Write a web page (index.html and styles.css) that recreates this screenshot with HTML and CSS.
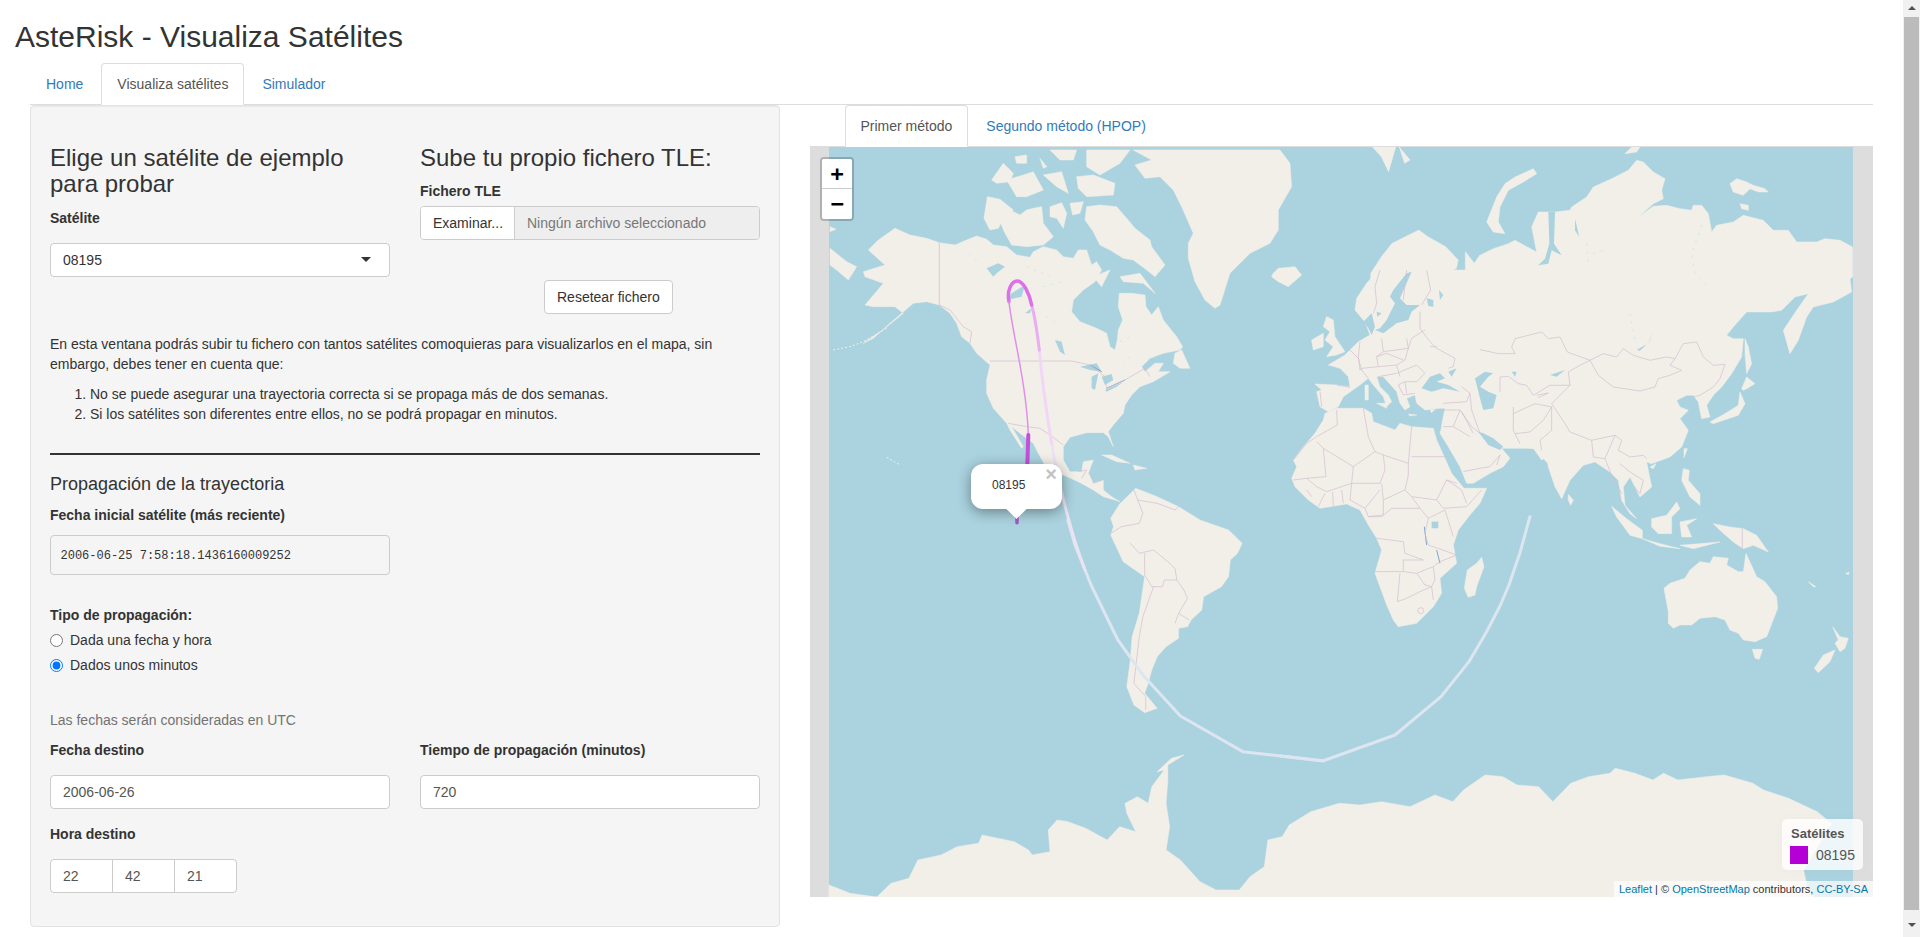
FILE: index.html
```html
<!DOCTYPE html>
<html lang="es">
<head>
    <meta charset="UTF-8">
    <title>AsteRisk - Visualiza Satélites</title>
    <link rel="stylesheet" href="styles.css">
</head>
<body>
    <div class="page">
        <h2 class="title">AsteRisk - Visualiza Satélites</h2>
        <ul class="nav-tabs">
            <li><a href="#">Home</a></li>
            <li class="active"><a href="#">Visualiza satélites</a></li>
            <li><a href="#">Simulador</a></li>
        </ul>

        <div class="main-row">
            <div class="well">
                <div class="form-cols">
                    <div>
                        <h3>Elige un satélite de ejemplo para probar</h3>
                        <label class="label-gap">Satélite</label>
                        <div class="select-box">
                            <span>08195</span>
                            <i class="caret"></i>
                        </div>
                    </div>
                    <div>
                        <h3>Sube tu propio fichero TLE:</h3>
                        <label>Fichero TLE</label>
                        <div class="file-group">
                            <span class="file-btn">Examinar...</span>
                            <span class="file-name">Ningún archivo seleccionado</span>
                        </div>
                        <button class="btn-reset" type="button">Resetear fichero</button>
                    </div>
                </div>

                <p class="intro">En esta ventana podrás subir tu fichero con tantos satélites comoquieras para visualizarlos en el mapa, sin embargo, debes tener en cuenta que:</p>
                <ol>
                    <li>No se puede asegurar una trayectoria correcta si se propaga más de dos semanas.</li>
                    <li>Si los satélites son diferentes entre ellos, no se podrá propagar en minutos.</li>
                </ol>
                <hr>

                <h4>Propagación de la trayectoria</h4>
                <label>Fecha inicial satélite (más reciente)</label>
                <pre class="half">2006-06-25 7:58:18.1436160009252</pre>

                <label class="tipo">Tipo de propagación:</label>
                <div class="radio"><input type="radio" name="tipo"><span>Dada una fecha y hora</span></div>
                <div class="radio"><input type="radio" name="tipo" checked><span>Dados unos minutos</span></div>

                <p class="help">Las fechas serán consideradas en UTC</p>

                <div class="form-cols">
                    <div>
                        <label class="label-gap">Fecha destino</label>
                        <input class="form-control" type="text" value="2006-06-26">
                    </div>
                    <div>
                        <label class="label-gap">Tiempo de propagación (minutos)</label>
                        <input class="form-control" type="text" value="720">
                    </div>
                </div>

                <label class="label-gap hora">Hora destino</label>
                <div class="time-group">
                    <span>22</span>
                    <span>42</span>
                    <span>21</span>
                </div>
            </div>

            <div class="map-col">
                <ul class="nav-tabs sub-tabs">
                    <li class="active"><a href="#">Primer método</a></li>
                    <li><a href="#">Segundo método (HPOP)</a></li>
                </ul>

                <div class="map">
                    <svg class="map-svg" viewBox="810 147 1063 750">
                        <rect class="sea" x="829" y="147" width="1024" height="750"/>

                        <g class="land">
                            <!-- Norteamerica y Groenlandia -->
                            <g transform="translate(830 150) scale(.3333)">
                                <polygon points="0,295 50,335 80,350 55,390 20,360 0,345"/>
                                <polygon points="0,230 18,238 0,245"/>
                                <polygon points="195,235 240,255 290,265 328,278 375,285 410,270 440,258 470,268 490,285 530,290 560,315 600,322 610,305 640,290 680,300 700,320 730,325 745,300 770,300 785,345 800,335 815,360 795,395 760,420 730,450 725,485 750,515 800,535 830,550 840,590 855,600 862,570 865,540 878,510 865,470 868,430 905,430 945,435 948,470 965,495 985,470 1000,510 1040,560 1058,590 1050,600 1000,610 960,625 935,650 945,665 975,640 1000,640 985,665 1020,665 970,695 930,710 905,735 885,765 880,790 850,825 835,845 850,890 835,860 820,848 770,848 720,862 700,890 700,930 720,965 755,965 760,935 790,930 775,970 790,1000 820,990 820,1020 845,1040 870,1055 855,1050 820,1040 790,1020 745,995 700,975 650,955 625,910 610,880 590,865 570,850 545,830 580,890 575,895 540,840 530,820 490,775 470,730 470,690 480,645 440,610 420,580 395,560 380,520 360,490 328,465 290,455 250,460 215,490 180,520 130,565 100,580 165,535 220,490 195,470 130,470 105,465 135,430 160,400 105,380 100,365 165,345 115,300 145,270"/>
                                <polygon points="1035,610 1055,600 1080,655 1050,655 1030,640"/>
                                <polygon points="462,205 472,140 510,148 550,180 520,205 505,235 480,240"/>
                                <polygon points="510,215 540,180 570,195 590,180 610,175 635,170 640,220 670,260 640,285 590,290 545,285 525,250"/>
                                <polygon points="660,170 695,158 710,190 700,235 680,205 660,200"/>
                                <polygon points="720,160 760,155 750,190 728,195"/>
                                <polygon points="770,170 810,165 860,170 890,205 915,235 960,270 965,290 1005,345 975,380 950,360 910,330 880,325 840,300 810,285 790,245 765,210"/>
                                <polygon points="790,380 840,360 815,410"/>
                                <polygon points="870,380 930,370 975,430 940,400 880,395"/>
                                <polygon points="485,90 520,40 550,70 540,95 500,100"/>
                                <polygon points="530,90 580,75 610,65 640,120 590,140 560,140"/>
                                <polygon points="555,20 590,15 590,40 560,40"/>
                                <polygon points="640,75 695,65 715,130 680,110"/>
                                <polygon points="740,80 790,75 855,100 850,135 770,140 745,115"/>
                                <polygon points="770,0 900,0 870,40 810,75 770,50"/>
                                <polygon points="660,0 740,0 730,30 690,30"/>
                                <polygon points="630,25 650,50 640,55"/>
                                <polygon points="910,0 1350,0 1380,40 1385,110 1345,180 1345,240 1320,280 1260,310 1200,370 1170,465 1155,475 1125,450 1095,395 1075,325 1075,280 1090,250 1055,170 1030,120 990,80 945,85 915,45 965,30"/>
                                <polygon points="1330,370 1345,355 1395,350 1415,375 1375,410 1345,395 1325,380"/>
                                <polygon points="815,915 845,915 900,940 860,935"/>
                                <polygon points="910,945 950,955 915,960"/>
                                <polygon points="1490,500 1510,510 1515,560 1545,605 1520,615 1490,620 1510,590 1485,570 1500,545 1480,530"/>
                                <polygon points="1445,570 1480,550 1480,590 1450,600"/>
                            </g>

                            <!-- Sudamerica, Antartida y norte de Europa -->
                            <g transform="translate(800 100) scale(.35714 .33333)">
                                <polygon points="895,1212 940,1165 1000,1190 1060,1220 1120,1260 1200,1290 1238,1330 1225,1360 1205,1380 1200,1430 1180,1460 1130,1490 1125,1530 1095,1560 1085,1580 1060,1585 1060,1615 1025,1640 1000,1670 985,1710 975,1750 965,1780 1000,1825 965,1838 935,1815 915,1760 925,1680 930,1610 950,1540 965,1430 905,1385 870,1305 878,1280 870,1255"/>
                                <polygon points="81,2355 105,2365 140,2380 215,2391 255,2350 305,2335 330,2280 395,2265 440,2240 500,2230 510,2205 600,2225 640,2250 650,2265 700,2255 695,2190 720,2160 750,2165 800,2185 860,2220 895,2180 940,2195 915,2140 910,2110 945,2090 975,2110 985,2060 1020,2010 1000,2015 1040,1975 1075,1965 1030,1995 1030,2040 1025,2110 1035,2180 1025,2250 1065,2280 1120,2345 1165,2370 1230,2370 1260,2330 1300,2300 1310,2220 1350,2210 1370,2175 1430,2135 1510,2110 1568,2115 1628,2105 1708,2120 1778,2085 1828,2105 1858,2070 1918,2025 1968,2030 2008,2055 2068,2060 2108,2105 2158,2050 2208,2030 2268,2020 2283,2005 2338,2020 2388,2040 2418,2020 2458,2040 2538,2030 2588,2025 2668,2050 2698,2070 2768,2095 2848,2135 2888,2170 2810,2310 2820,2360 2840,2391 81,2391"/>
                                <g transform="translate(1568 0)">
                                    <polygon points="30,520 60,470 90,430 165,390 190,410 240,440 275,480 270,505 235,525 225,545 260,540 295,510 295,455 320,490 336,465 336,620 30,620"/>
                                    <polygon points="35,141 100,141 80,215 60,170"/>
                                    <polygon points="110,141 140,180 125,190"/>
                                </g>
                            </g>

                            <!-- Europa, Oriente Medio, Africa -->
                            <g transform="translate(1240 270) scale(.3333)">
                                <polygon points="415,0 380,40 350,85 345,120 370,150 375,155 390,195 355,215 330,240 315,255 265,285 300,295 325,320 330,350 290,345 225,342 245,360 230,365 240,410 265,425 295,410 310,380 360,345 385,325 400,345 430,380 440,410 455,395 445,375 420,350 410,320 430,320 470,365 480,400 495,420 510,410 500,385 525,375 530,400 555,420 600,415 615,415 605,465 605,470 600,490 625,530 660,590 680,640 700,640 750,610 790,590 810,565 785,535 815,535 880,535 905,570 920,560 925,590 945,650 965,685 985,625 1035,580 1075,560 1100,570 1100,0"/>
                                <polygon points="255,430 290,415 370,415 395,430 400,455 465,480 480,460 515,470 580,475 590,510 635,610 672,655 740,655 720,700 690,735 655,780 640,825 650,880 600,925 605,970 580,1010 530,1060 475,1070 460,1050 440,1005 405,910 425,840 410,805 382,760 360,720 320,702 240,715 205,690 165,650 155,625 170,590 160,570 190,530 225,490 250,450"/>
                                <polygon points="410,400 440,400 440,415"/>
                                <polygon points="375,345 385,345 385,390 375,390"/>
                                <polygon points="505,432 530,435 510,438"/>
                                <polygon points="570,420 585,418 575,428"/>
                            </g>
                            <polygon transform="translate(1280 480) scale(.3333)" points="605,232 612,260 590,320 585,345 565,352 553,325 562,270 590,250"/>

                            <!-- Asia norte y este -->
                            <g transform="translate(1480 147) scale(.3333)">
                                <polygon points="0,325 40,305 85,290 105,280 170,315 165,290 155,240 175,195 205,195 225,195 270,190 275,180 320,150 340,120 395,95 445,70 470,40 490,45 520,75 555,95 545,130 550,155 520,170 475,210 520,178 560,175 600,185 635,190 640,175 665,175 685,200 695,255 710,235 760,225 790,205 850,220 880,250 925,250 950,285 1010,285 1035,275 1080,280 1118,300 1118,390 1110,395 1115,435 1060,465 1000,480 980,510 955,580 930,620 910,550 950,490 985,440 945,450 905,490 875,495 800,495 760,540 740,565 760,575 790,575 785,630 755,680 725,720 700,745 680,775 690,810 665,815 655,765 640,745 620,745 590,760 600,780 625,790 600,815 625,850 605,900 570,930 515,950 500,945 515,1020 480,1050 450,990 430,1020 435,1075 470,1115 450,1100 425,1060 415,1000 390,975 345,945 310,955 270,1000 245,1055 230,1020 205,950 170,915 165,905 110,900 60,880 0,870"/>
                                <polygon points="20,225 50,150 75,110 105,90 160,65 170,80 130,105 85,130 60,180 55,225 75,260 40,255"/>
                                <polygon points="435,20 455,0 480,0 470,15"/>
                                <polygon points="750,110 770,95 800,105 820,115 855,125 865,135 835,135 810,125 790,145 760,135"/>
                                <polygon points="780,170 805,175 805,190 785,185"/>
                                <polygon points="795,575 805,600 815,650 800,680 795,620"/>
                                <polygon points="785,725 800,690 825,710 800,725 790,730"/>
                                <polygon points="690,825 735,800 775,775 780,735 795,770 775,805 700,830"/>
                                <polygon points="612,905 622,905 612,932"/>
                                <polygon points="510,960 528,950 520,965"/>
                                <polygon points="610,965 628,970 625,1000 660,1040 660,1075 630,1050 605,1000"/>
                                <polygon points="515,1115 560,1105 590,1065 600,1085 575,1110 575,1160 535,1160 515,1140"/>
                                <polygon points="600,1125 650,1115 620,1135 635,1170 605,1170"/>
                                <polygon points="395,1078 440,1115 487,1150 487,1175 450,1165 410,1110"/>
                                <polygon points="487,1175 540,1190 600,1205 540,1198"/>
                                <polygon points="600,1195 720,1185 640,1205"/>
                                <polygon points="700,1130 750,1140 790,1145 830,1165 865,1215 820,1195 790,1205 760,1185 720,1150"/>
                                <polygon points="265,1042 280,1060 272,1075 265,1060"/>
                            </g>

                            <!-- Oceania -->
                            <g transform="translate(1600 540) scale(.3333)">
                                <polygon points="192,145 210,130 255,115 270,90 300,65 330,70 340,50 385,55 380,75 415,95 430,95 438,40 470,110 495,125 530,170 533,205 510,265 500,290 465,305 430,300 415,280 390,270 375,240 345,230 300,235 275,255 240,255 220,265 205,250 205,215"/>
                                <polygon points="457,328 488,328 478,358 465,355"/>
                                <polygon points="698,260 720,290 745,295 735,325 720,335 705,310 715,300"/>
                                <polygon points="705,330 690,365 655,398 643,385 670,345"/>
                                <polygon points="625,125 648,140 640,140"/>
                                <polygon points="737,100 748,97 745,104"/>
                            </g>
                        </g>

                        <g class="water">
                            <g transform="translate(830 150) scale(.3333)">
                                <polygon points="470,355 505,340 525,350 500,370 490,380"/>
                                <polygon points="530,450 545,430 585,405 575,440"/>
                                <polygon points="585,490 605,475 600,490"/>
                                <polygon points="675,570 695,575 705,615 690,605"/>
                                <polygon points="750,650 800,640 815,665 780,660"/>
                                <polygon points="785,680 805,670 795,720 785,715"/>
                                <polygon points="815,680 845,672 850,690 825,705"/>
                                <polygon points="825,720 880,695 860,710 830,725"/>
                            </g>
                            <g transform="translate(1240 270) scale(.3333)">
                                <polygon points="460,60 500,10 515,5 495,50 480,85 500,105 540,105 515,125 505,150 470,160 430,190 405,180 420,175 440,150 465,100 450,80"/>
                                <polygon points="370,155 395,130 405,170 395,195 385,175"/>
                                <polygon points="560,85 580,90 580,110 565,108"/>
                                <polygon points="597,60 610,75 600,90"/>
                                <polygon points="410,125 425,130 412,140"/>
                                <polygon points="545,355 570,320 600,310 615,325 590,335 625,345 660,365 610,355 575,365"/>
                                <polygon points="625,305 650,295 635,320"/>
                                <polygon points="705,325 735,305 760,310 745,320 720,350 745,365 770,375 760,415 730,420 720,385"/>
                                <polygon points="715,485 745,525 780,540 790,530 760,505 730,490"/>
                                <polygon points="815,305 830,305 825,320"/>
                                <polygon points="930,315 975,300 950,320"/>
                                <polygon points="1190,240 1225,220 1240,182 1228,215 1200,242"/>
                                <polygon points="575,755 595,755 595,775 575,775"/>
                            </g>
                            <polygon transform="translate(1480 147) scale(.3333)" points="205,195 225,195 222,290 245,325 215,310 205,350 175,355 195,335 208,290"/>
                            <polygon transform="translate(1480 147) scale(.3333)" points="285,215 298,270 285,250"/>
                        </g>

                        <path class="rivers" transform="translate(830 150) scale(.3333)" d="M780 645 L815 665 M830 715 L885 690"/>
                        <path class="rivers" transform="translate(1240 270) scale(.3333)" d="M553 770 L560 825 M590 840 L600 880"/>
                        <path class="specks" transform="translate(830 150) scale(.3333)" d="M640 410 L700 395 M650 500 L690 525 M870 575 L905 560 M440 330 L400 300 M590 350 L660 380 M900 620 L880 640"/>
                        <path class="specks" transform="translate(1480 147) scale(.3333)" d="M665 235 L635 320 L645 380 L680 415 M320 290 L325 350 M340 320 L370 310 M450 500 L465 580"/>
                        <path class="dots" transform="translate(830 150) scale(.3333)" d="M10 600 L60 590 L100 575 L170 535 M170 922 L210 945"/>

                        <path class="borders" transform="translate(830 150) scale(.3333)" d="M328 278 L328 465 L360 480 L400 530 L425 545 L420 580 M480 633 L725 633 L780 645 L825 680 L830 715 L885 690 L945 655 L960 680 M535 820 L590 830 L630 835 L660 855 L700 885 M745 965 L770 960 L755 985 M790 975 L790 1000 L820 990"/>
                        <path class="borders" transform="translate(800 100) scale(.35714 .33333)" d="M925 1330 L950 1360 L990 1350 L1030 1385 L1050 1405 L1055 1440 L1020 1440 L1015 1460 L985 1460 L965 1425 L965 1360 M990 1460 L960 1550 L950 1610 L935 1750 L968 1790 L968 1830 M1055 1440 L1075 1470 L1085 1495 L1060 1540 L1050 1570 M1060 1540 L1090 1560 M870 1300 L900 1280 L950 1270 L960 1240 L935 1170 M945 1200 L1000 1210 L1050 1230 M1050 1230 L1060 1220"/>
                        <path class="borders" transform="translate(1240 270) scale(.3333)" d="M420 0 L405 50 L410 100 L400 130 M500 0 L490 90 M560 0 L572 60 L545 105 M540 125 L540 175 L570 215 L590 235 L645 265 L640 290 L625 295 M425 205 L430 245 L505 235 L500 205 M505 235 L515 205 L555 180 M360 215 L355 260 L360 300 L365 295 M330 240 L355 265 L365 300 L385 325 M290 345 L330 352 M240 365 L245 410 M365 295 L415 290 L470 285 L495 270 L505 235 M415 290 L410 260 L440 250 L490 270 M430 245 L410 260 M470 285 L480 320 M415 320 L470 310 L530 285 L555 310 L530 335 L495 335 L475 345 M495 335 L500 370 M475 345 L490 375 L525 370 M570 230 L590 230 M610 400 L680 395 L690 370 L665 350 M610 420 L660 420 L695 470 L720 490 M640 470 L690 500 M610 470 L640 470 L660 420 M690 370 L695 420 L720 490 M665 425 L700 490 M670 605 L720 595 L750 590 L780 555 M780 555 L770 585 M290 420 L292 465 L230 500 L200 520 L160 570 M370 415 L385 500 L405 545 L340 590 L250 535 L230 515 M250 535 L258 620 L200 625 L160 630 M340 590 L335 640 L260 665 L230 650 L200 625 M405 545 L430 555 L435 600 L420 640 L335 640 M430 555 L505 580 L515 470 M515 560 L620 560 M505 580 L505 615 L495 660 L430 690 L425 640 M495 660 L515 680 L590 690 L620 630 L650 640 M515 680 L540 715 M590 690 L610 715 L680 710 L725 660 M620 630 L665 660 L680 700 M335 640 L330 690 L375 715 L385 740 L430 735 L430 690 M375 715 L420 660 M278 665 L280 710 M305 660 L310 700 M255 670 L235 710 M200 660 L215 680 M385 740 L425 740 L455 715 L540 715 L565 745 L555 790 L565 825 L650 855 L600 875 M410 805 L490 815 L495 850 L550 870 L490 870 L490 905 L405 905 M490 905 L530 910 L580 890 L600 875 M480 910 L472 995 L500 985 L540 965 L575 950 L580 990 M530 910 L555 945 L575 950 M565 745 L615 720 L640 800 M580 890 L585 930 L575 950"/>
                        <circle class="borders" cx="1420.7" cy="610.7" r="3"/>
                        <path class="borders" transform="translate(1480 147) scale(.3333)" d="M0 608 L55 620 L105 620 L95 600 L105 575 L185 555 L205 575 L240 570 L262 615 L330 640 M60 690 L60 735 M60 690 L85 688 L115 710 L140 715 L160 745 L210 715 L270 715 L265 675 L300 655 L330 640 M330 640 L370 620 L410 630 L430 605 L460 625 L510 640 L560 630 L585 635 L570 655 L605 670 L570 685 L535 695 L525 720 L480 732 L400 720 L355 685 L330 640 M585 635 L610 590 L650 585 L670 630 L700 655 L735 652 L720 695 L700 720 L660 745 L640 750 M270 715 L215 770 L255 830 L270 855 L335 880 L405 865 L425 880 L415 910 L450 930 L490 925 L500 935 M100 780 L100 850 L120 890 M100 800 L165 770 L215 780 L190 820 L150 855 L105 860 M215 780 L215 850 L180 880 L185 910 M335 880 L340 930 M405 865 L375 935 L340 930 M375 935 L395 985 L425 1040 M420 950 L450 975 L490 1000 L480 1040 L460 1015 M170 745 L205 738 L175 752 M787 1145 L787 1205"/>

                        <!-- Trayectoria -->
                        <g class="orbit">
                            <polyline class="orbit-end" transform="translate(1280 480) scale(.3333)" points="750,110 740,145 732,175 720,218 705,262 687,315 660,378 620,455 567,545 483,650 345,765 128,843 0,828"/>
                            <polyline class="orbit-end" transform="translate(800 100) scale(.35714 .33333)" points="1465,1982 1240,1955 1065,1848 960,1725 890,1620 815,1455 770,1335 750,1260"/>
                            <g transform="translate(830 150) scale(.3333)">
                                <path class="orbit-fade3" d="M665 880 C680 970 715 1130 765 1260"/>
                                <path class="orbit-fade2" d="M628 600 C635 680 650 790 665 880"/>
                                <path class="orbit-fade1" d="M605 465 C615 500 622 550 628 600"/>
                                <path class="orbit-top" d="M537 455 C530 420 545 393 562 393 C580 393 598 430 605 465"/>
                                <path class="orbit-thin" d="M537 455 C545 540 590 700 595 855"/>
                                <path class="orbit-start" d="M595 855 L592 945"/>
                                <path class="orbit-tip" d="M561 1100 L561 1118"/>
                            </g>
                        </g>
                    </svg>

                    <div class="zoom-ctl">
                        <a href="#">+</a>
                        <a href="#">−</a>
                    </div>

                    <div class="popup">
                        <span class="popup-close">×</span>
                        <span>08195</span>
                        <i class="popup-tip"></i>
                    </div>

                    <div class="legend">
                        <strong>Satélites</strong>
                        <div class="legend-row"><i></i><span>08195</span></div>
                    </div>

                    <div class="attribution"><a href="#">Leaflet</a> | © <a href="#">OpenStreetMap</a> contributors, <a href="#">CC-BY-SA</a></div>
                </div>
            </div>
        </div>
    </div>

    <div class="scrollbar">
        <i class="arrow-up"></i>
        <div class="thumb"></div>
        <i class="arrow-down"></i>
    </div>
</body>
</html>
```

FILE: styles.css
```css
html, body {
    height: 100%;
    margin: 0;
    overflow: hidden;
}

body {
    display: flex;
    font-family: "Liberation Sans", Arial, sans-serif;
    font-size: 14px;
    line-height: 20px;
    color: #333;
    background-color: #fff;
}

* {
    box-sizing: border-box;
}

.page {
    width: 1903px;
    padding: 0 15px;
    flex-shrink: 0;
}

.title {
    margin: 20px 0 10px;
    font-size: 30px;
    font-weight: 500;
    line-height: 33px;
}

/* tabs */
.nav-tabs {
    display: flex;
    margin: 0 15px;
    padding: 0;
    height: 42px;
    list-style: none;
    border-bottom: 1px solid #ddd;
}

.nav-tabs li {
    margin-right: 2px;
    height: 42px;
}

.nav-tabs a {
    display: block;
    padding: 10px 15px;
    border: 1px solid transparent;
    border-radius: 4px 4px 0 0;
    color: #337ab7;
    text-decoration: none;
}

.nav-tabs .active a {
    height: 42px;
    color: #555;
    background-color: #fff;
    border-color: #ddd #ddd transparent;
}

.sub-tabs {
    margin: 0;
    padding-left: 34.5px;
}

/* layout */
.main-row {
    display: flex;
    gap: 30px;
    margin: 0 15px;
}

.well {
    width: 750px;
    height: 822px;
    padding: 19px;
    background-color: #f5f5f5;
    border: 1px solid #e3e3e3;
    border-radius: 4px;
    box-shadow: inset 0 1px 1px rgba(0, 0, 0, .05);
}

.map-col {
    width: 1063px;
}

.form-cols {
    display: grid;
    grid-template-columns: 340px 340px;
    gap: 30px;
}

h3 {
    margin: 20px 0 10px;
    font-size: 24px;
    font-weight: 500;
    line-height: 26.4px;
}

h4 {
    margin: 0 0 11px;
    font-size: 18px;
    font-weight: 500;
    line-height: 20px;
}

label {
    display: block;
    margin-bottom: 5px;
    font-weight: 700;
}

.label-gap {
    margin-bottom: 15px;
}

/* inputs */
.select-box {
    display: flex;
    align-items: center;
    justify-content: space-between;
    height: 34px;
    padding: 0 18px 0 12px;
    background-color: #fff;
    border: 1px solid #ccc;
    border-radius: 4px;
}

.caret {
    border-top: 5px solid #333;
    border-left: 5px solid transparent;
    border-right: 5px solid transparent;
}

.file-group {
    display: flex;
    height: 34px;
    border: 1px solid #ccc;
    border-radius: 4px;
    overflow: hidden;
}

.file-btn {
    width: 94px;
    padding: 6px 12px;
    background-color: #fff;
    border-right: 1px solid #ccc;
}

.file-name {
    flex: 1;
    padding: 6px 12px;
    background-color: #eee;
    color: #777;
}

.btn-reset {
    display: block;
    height: 34px;
    margin: 40px 0 0 124px;
    padding: 6px 12px;
    font: inherit;
    color: #333;
    background-color: #fff;
    border: 1px solid #ccc;
    border-radius: 4px;
}

.intro {
    margin: 20px 0 10px;
}

ol {
    margin: 0;
    padding-left: 40px;
}

hr {
    height: 2px;
    margin: 29px 0 19px;
    border: 0;
    background-color: #333;
}

pre {
    margin: 0;
    padding: 9.5px;
    height: 40px;
    font-family: "Liberation Mono", monospace;
    font-size: 12px;
    background-color: #f5f5f5;
    border: 1px solid #ccc;
    border-radius: 4px;
}

.half {
    width: 340px;
    margin-top: 10px;
}

.tipo {
    margin-top: 30px;
}

.radio {
    display: flex;
    align-items: center;
    height: 20px;
    margin-top: 5px;
}

.radio input {
    width: 13px;
    height: 13px;
    margin: 0 7px 0 0;
}

.help {
    margin: 35px 0 10px;
    color: #737373;
}

.form-control {
    display: block;
    width: 100%;
    height: 34px;
    padding: 6px 12px;
    font: inherit;
    color: #555;
    background-color: #fff;
    border: 1px solid #ccc;
    border-radius: 4px;
}

.hora {
    margin-top: 15px;
}

.time-group {
    display: flex;
    width: 187px;
    height: 34px;
    background-color: #fff;
    border: 1px solid #ccc;
    border-radius: 4px;
    color: #555;
}

.time-group span {
    flex: 1;
    padding: 6px 12px;
    border-left: 1px solid #ccc;
}

.time-group span:first-child {
    border-left: 0;
}

/* map */
.map {
    position: relative;
    height: 750px;
    background-color: #ddd;
    overflow: hidden;
}

.map-svg {
    display: block;
    width: 100%;
    height: 100%;
}

.sea {
    fill: #aad3df;
}

.land polygon {
    fill: #f2efe9;
    stroke: #f2efe9;
    stroke-width: .5px;
    stroke-linejoin: round;
    vector-effect: non-scaling-stroke;
}

.water polygon {
    fill: #aad3df;
}

.borders {
    fill: none;
    stroke: #d3bdd0;
    stroke-width: .7px;
    vector-effect: non-scaling-stroke;
}

.rivers {
    fill: none;
    stroke: #7fa6cb;
    stroke-width: 1px;
    vector-effect: non-scaling-stroke;
}

.specks {
    fill: none;
    stroke: #cfe4ea;
    stroke-width: 1px;
    stroke-dasharray: 2 6;
    vector-effect: non-scaling-stroke;
}

.dots {
    fill: none;
    stroke: #f2efe9;
    stroke-width: 1px;
    stroke-dasharray: 2 2;
    vector-effect: non-scaling-stroke;
}

.orbit polyline, .orbit path {
    fill: none;
    stroke-linecap: round;
    stroke-linejoin: round;
    vector-effect: non-scaling-stroke;
}

.orbit-end {
    stroke: #dde6f0;
    stroke-width: 3px;
}

.orbit-fade3 {
    stroke: #ebe2f3;
    stroke-width: 3px;
}

.orbit-fade2 {
    stroke: #f1d6f6;
    stroke-width: 3px;
}

.orbit-fade1 {
    stroke: #e8aef0;
    stroke-width: 3px;
}

.orbit-top {
    stroke: #dc70ea;
    stroke-width: 3.5px;
}

.orbit-thin {
    stroke: #df8fea;
    stroke-width: 1.5px;
}

.orbit-start {
    stroke: #c44fda;
    stroke-width: 4px;
}

.orbit-tip {
    stroke: #a955c9;
    stroke-width: 3.5px;
}

.zoom-ctl {
    position: absolute;
    top: 10px;
    left: 10px;
    border: 2px solid rgba(0, 0, 0, .2);
    border-radius: 4px;
    background-clip: padding-box;
}

.zoom-ctl a {
    display: block;
    width: 30px;
    height: 30px;
    font: 700 22px/30px "DejaVu Sans Mono", monospace;
    text-align: center;
    text-decoration: none;
    color: #000;
    background-color: #fff;
    border-bottom: 1px solid #ccc;
}

.zoom-ctl a:first-child {
    border-radius: 2px 2px 0 0;
}

.zoom-ctl a:last-child {
    border-bottom: 0;
    border-radius: 0 0 2px 2px;
}

.popup {
    position: absolute;
    left: 161px;
    top: 317px;
    width: 91px;
    height: 45px;
    padding: 13px 0 0 21px;
    font-size: 12px;
    line-height: 17px;
    background-color: #fff;
    border-radius: 12px;
    box-shadow: 0 3px 14px rgba(0, 0, 0, .4);
}

.popup-close {
    position: absolute;
    top: 1px;
    right: 5px;
    font: 700 20px/18px "Liberation Sans", sans-serif;
    color: #c3c3c3;
}

.popup-tip {
    position: absolute;
    left: 38px;
    top: 37px;
    width: 15px;
    height: 15px;
    background-color: #fff;
    transform: rotate(45deg);
}

.legend {
    position: absolute;
    left: 972px;
    top: 672px;
    width: 81px;
    height: 51px;
    padding: 6px 8px;
    color: #555;
    background-color: rgba(255, 255, 255, .8);
    border-radius: 5px;
    box-shadow: 0 0 15px rgba(0, 0, 0, .02);
}

.legend strong {
    display: block;
    margin-left: 1px;
    font-size: 13px;
    line-height: 18px;
}

.legend-row {
    display: flex;
    align-items: center;
    gap: 8px;
    height: 18px;
    margin-top: 3px;
}

.legend-row i {
    width: 18px;
    height: 18px;
    background-color: #b400d6;
}

.attribution {
    position: absolute;
    right: 0;
    bottom: 0;
    padding: 0 5px;
    font-size: 11px;
    line-height: 16px;
    background-color: rgba(255, 255, 255, .7);
}

.attribution a {
    color: #0078a8;
    text-decoration: none;
}

/* scrollbar */
.scrollbar {
    display: flex;
    flex-direction: column;
    align-items: center;
    width: 17px;
    height: 100%;
    background-color: #f1f1f1;
}

.thumb {
    width: 15px;
    height: 893px;
    background-color: #bbb;
}

.arrow-up, .arrow-down {
    display: block;
    border-left: 4px solid transparent;
    border-right: 4px solid transparent;
}

.arrow-up {
    margin: 6px 0 7px;
    border-bottom: 4px solid #505050;
}

.arrow-down {
    margin: 13px 0 0;
    border-top: 4px solid #505050;
}
```
